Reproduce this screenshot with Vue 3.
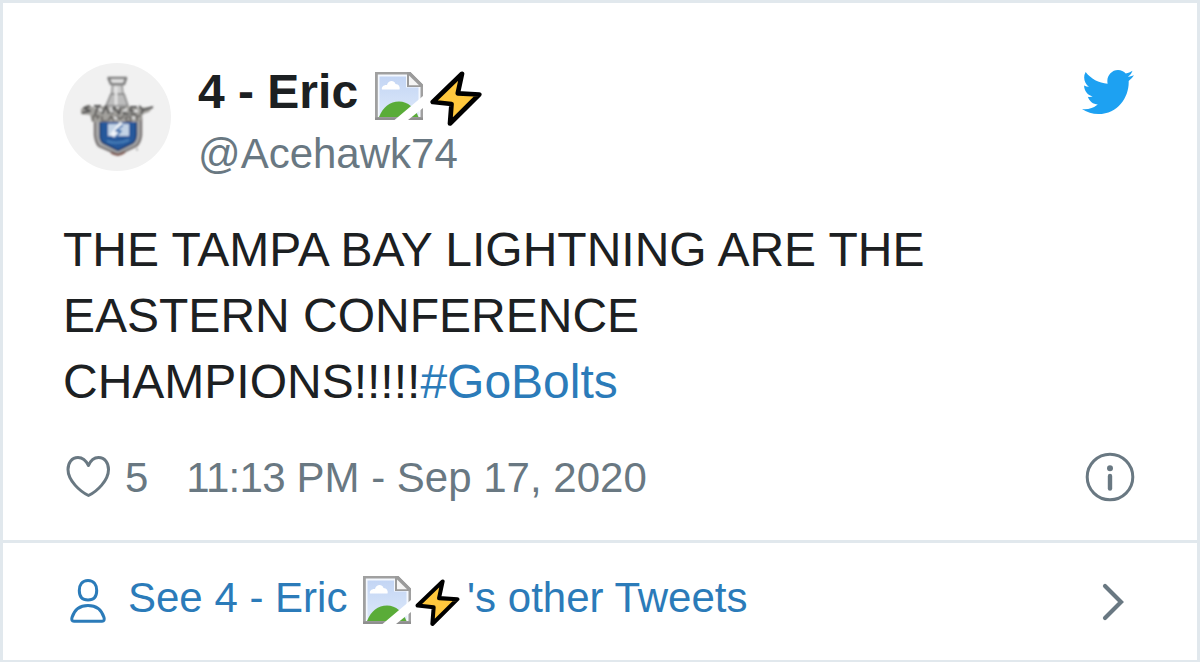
<script setup>
const author = '4 - Eric'
</script>

<template>
  <article class="card">
    <svg width="0" height="0" class="defs" aria-hidden="true">
      <defs>
        <linearGradient id="sky" x1="0" y1="0" x2="0" y2="1">
          <stop offset="0" stop-color="#c3d5f4" />
          <stop offset="1" stop-color="#dce8fa" />
        </linearGradient>
        <filter id="smooth" x="0" y="0" width="100%" height="100%"><feGaussianBlur stdDeviation="0.6" /></filter>
        <symbol id="missing" viewBox="0 0 48 48">
          <path d="M0 0H35L48 13V24L19.500 48H0Z" fill="#a0a0a0" />
          <g filter="url(#smooth)">
            <path d="M0 0H35L48 13V48H0Z" fill="#a0a0a0" />
            <path d="M2.800 2.500H32V15H45.500V45H2.800Z" fill="#f4f8fe" />
            <path d="M4.500 4.500H31V15.500H43.500V43.500H4.500Z" fill="url(#sky)" />
            <path d="M7 17.500C6 15 9 12.500 12 13C13 8.500 19 7.500 20.500 12C23.500 12 25.500 15 24.500 17.500Z" fill="#fff" />
            <path d="M4 45C8 35 15 29.500 24 29.500C33 29.500 40 36 43.500 45Z" fill="#5aac38" />
            <path d="M0 45.500H48V48H0Z" fill="#8f8f8f" />
            <path d="M32 0H35.500L48 12.500V15H32Z" fill="#9b9b9b" />
            <path d="M34 3.500L44 13.200H34Z" fill="#f5f5f5" />
          </g>
          <path d="M48 24V36L33 48H19.500Z" fill="#fff" />
        </symbol>
        <symbol id="bolt" viewBox="0 0 52 56">
          <path d="M32 2.800L2.800 31L21.500 33L20 52.500L49.200 23.500L27.800 22.300Z" fill="#ffc83d" stroke="#000" stroke-width="4.700" stroke-linejoin="round" />
        </symbol>
      </defs>
    </svg>

    <div class="tweet">
      <header class="header">
        <svg class="avatar" viewBox="0 0 108 108">
          <defs>
            <clipPath id="round"><circle cx="54" cy="54" r="54" /></clipPath>
            <filter id="soft" x="-10%" y="-10%" width="120%" height="120%"><feGaussianBlur stdDeviation="0.9" /></filter>
          </defs>
          <g clip-path="url(#round)">
            <rect width="108" height="108" fill="#f1f1f1" />
            <g filter="url(#soft)" stroke-linejoin="round">
              <path d="M45.500 15H63L61 21H48Z" fill="#e8e8e8" stroke="#7d7d7d" stroke-width="2.600" />
              <path d="M49.500 22H59L60 32H48.500Z" fill="#cfcfcf" stroke="#8b8b8b" stroke-width="1.500" />
              <path d="M48 31H61L65 43H43Z" fill="#bcbcbc" stroke="#808080" stroke-width="1.500" />
              <path d="M53 23V42" stroke="#e8e8e8" stroke-width="2.500" />
              <path d="M32 54H78V72Q77 80 73 83L55 91.500L36 83Q33 80 32 72Z" fill="#b0b0b0" stroke="#777272" stroke-width="2.400" />
              <path d="M37 58H73.500V72Q73 78 70 80L55 87.500L40 80Q37 78 37 72Z" fill="#28599b" stroke="#173765" stroke-width="1.500" />
              <path d="M45 61H66V73H45Z" fill="#c3d3e6" />
              <path d="M49 73L59 60" stroke="#f2f6fb" stroke-width="5" />
              <path d="M60 62L53 68H58L52 75" fill="none" stroke="#386fae" stroke-width="1.800" />
              <path d="M44 78Q54 82 66 77" fill="none" stroke="#477fb9" stroke-width="2" />
              <path d="M48 89.500Q55 94 62 89" fill="none" stroke="#7c5248" stroke-width="2" />
              <path d="M18 46L24 42L33 45L41 43L52 46L64 43L73 45L90 44L86 49L80 51L77 59H29L27 52L18 51Z" fill="#a3a19d" />
              <path d="M27 43L21 45L27 48L19 50M31 43H38M35 43L32 52M39 51L43 43L46 51M49 51L51 44L56 51L58 44M61 44V51H66M74 44H68L67 48H73M67 51H73M76 43L80 47L90 44M80 47L78 51" fill="none" stroke="#555" stroke-width="2" />
              <path d="M30 58V53H36L34 56M39 53V58H44M45 58L48 53L51 58M53 53L57 56L61 53M63 58V54H68V58H63M72 53H78M74 53V58" fill="none" stroke="#666360" stroke-width="1.700" />
              <path d="M36 46L39 48M47 46L50 49M60 48L64 46M71 48H75M51 55H54M69 55H72" stroke="#e6e6e6" stroke-width="2" />
              <path d="M73 86.500H75" stroke="#999" stroke-width="1.500" />
            </g>
          </g>
        </svg>
        <div class="identity">
          <div class="name">{{ author }} <svg class="missing"><use href="#missing" /></svg><svg class="bolt"><use href="#bolt" /></svg></div>
          <div class="handle">@Acehawk74</div>
        </div>
        <svg class="bird" viewBox="4 10 63.812 51.858" preserveAspectRatio="none">
          <path fill="#1da1f2" d="M67.812 16.141a26.246 26.246 0 0 1-7.519 2.06 13.134 13.134 0 0 0 5.756-7.244 26.127 26.127 0 0 1-8.313 3.176A13.075 13.075 0 0 0 48.182 10c-7.229 0-13.092 5.861-13.092 13.093 0 1.026.118 2.021.338 2.981-10.885-.548-20.528-5.757-26.987-13.679a13.048 13.048 0 0 0-1.771 6.581c0 4.542 2.312 8.551 5.824 10.898a13.048 13.048 0 0 1-5.93-1.638c-.002.055-.002.11-.002.162 0 6.345 4.513 11.638 10.504 12.84a13.177 13.177 0 0 1-3.449.457c-.846 0-1.667-.078-2.465-.231 1.667 5.2 6.499 8.986 12.23 9.09a26.276 26.276 0 0 1-16.26 5.606A26.21 26.21 0 0 1 4 55.976a37.036 37.036 0 0 0 20.067 5.882c24.083 0 37.251-19.949 37.251-37.249 0-.566-.014-1.134-.039-1.694a26.597 26.597 0 0 0 6.533-6.774z" />
        </svg>
      </header>

      <p class="message">THE TAMPA BAY LIGHTNING ARE THE<br />EASTERN CONFERENCE<br />CHAMPIONS!!!!!<a>#GoBolts</a></p>

      <div class="meta">
        <svg class="heart" viewBox="0 0 46 44">
          <path d="M23.500 10.500C20.500 4.500 16.500 2.500 13 2.500C6.500 2.500 3 8 3 14.500C3 25.500 15 36.500 23.500 40.500C32 36.500 43.500 25.500 43.500 14.500C43.500 8 40 2.500 33.500 2.500C30 2.500 26 4.500 23.500 10.500Z" />
        </svg>
        <span class="likes">5</span>
        <span class="date"><span class="time">11:13</span> PM - Sep 17, 2020</span>
        <svg class="info" viewBox="0 0 50 50">
          <circle cx="25" cy="25" r="22.800" fill="none" stroke="#697882" stroke-width="3" />
          <circle cx="25" cy="16.200" r="3" fill="#697882" />
          <path d="M25 24V36.500" stroke="#697882" stroke-width="4.400" stroke-linecap="round" />
        </svg>
      </div>
    </div>

    <footer class="footer">
      <svg class="person" viewBox="0 0 38 46">
        <path d="M19 2.500C13 2.500 10.300 7 10.300 12.500C10.300 18.500 12.500 22 19 22C25.500 22 27.700 18.500 27.700 12.500C27.700 7 25 2.500 19 2.500Z" />
        <path d="M5 43.200H33Q36 43 35 39.500C32.500 31.500 27 27.500 19 27.500C11 27.500 5.500 31.500 3 39.500Q2 43 5 43.200Z" />
      </svg>
      <span class="more">See {{ author }} <svg class="missing"><use href="#missing" /></svg><svg class="bolt"><use href="#bolt" /></svg>'s other Tweets</span>
      <svg class="chevron" viewBox="0 0 24 40"><path d="M4 4L20 20L4 36" /></svg>
    </footer>
  </article>
</template>

<style>
body {
  background: #fff;
}
</style>

<style scoped>
.card {
  box-sizing: border-box;
  width: 1200px;
  height: 662px;
  border: 3px solid #e1e8ed;
  border-bottom-width: 2px;
  background: #fff;
  font-family: "Liberation Sans", Arial, sans-serif;
  color: #1c2022;
  overflow: hidden;
}
.defs {
  position: absolute;
}
.tweet {
  box-sizing: border-box;
  height: 540px;
  padding: 60px 60px 0;
  border-bottom: 3px solid #e1e8ed;
}
.header {
  display: flex;
  align-items: flex-start;
  height: 108px;
}
.avatar {
  width: 108px;
  height: 108px;
  flex: none;
}
.identity {
  margin-left: 27px;
  flex: 1;
}
.name {
  height: 60px;
  line-height: 58px;
  font-size: 48px;
  font-weight: 700;
  white-space: nowrap;
}
.handle {
  line-height: 62px;
  font-size: 42px;
  color: #697882;
}
.missing {
  width: 48px;
  height: 48px;
}
.name .missing {
  margin-left: 4px;
  vertical-align: -12px;
}
.name .bolt {
  width: 52px;
  height: 56px;
  margin-left: 7px;
  vertical-align: -19px;
}
.bird {
  width: 52px;
  height: 44px;
  margin: 7px 3px 0 0;
}
.message {
  margin: 46px 0 0;
  font-size: 48px;
  line-height: 66px;
  white-space: nowrap;
}
.message a {
  color: #2b7bb9;
}
.meta {
  display: flex;
  align-items: center;
  height: 50px;
  margin-top: 37px;
  font-size: 42px;
  color: #697882;
}
.heart {
  width: 46px;
  height: 44px;
  margin: 0 0 1px 2px;
}
.heart path {
  fill: none;
  stroke: #697882;
  stroke-width: 3;
  stroke-linejoin: round;
}
.likes {
  margin-left: 14px;
  padding-top: 2px;
}
.date {
  margin-left: 38px;
  padding-top: 2px;
}
.time {
  letter-spacing: -0.7px;
}
.info {
  width: 50px;
  height: 50px;
  margin: 0 2px 0 auto;
}
.footer {
  display: flex;
  align-items: center;
  height: 117px;
  padding: 0 60px;
  font-size: 42px;
  color: #2b7bb9;
}
.person {
  width: 38px;
  height: 46px;
  margin: 0 0 1px 6px;
}
.person path {
  fill: none;
  stroke: #2b7bb9;
  stroke-width: 3;
  stroke-linejoin: round;
}
.more {
  margin-left: 21px;
  padding-bottom: 6px;
  line-height: 54px;
  white-space: nowrap;
}
.more .missing {
  margin-left: 4px;
  vertical-align: -12px;
}
.more .bolt {
  width: 45px;
  height: 48px;
  margin: 0 7px 0 4px;
  vertical-align: -15px;
}
.chevron {
  width: 24px;
  height: 40px;
  margin: 0 12px 0 auto;
}
.chevron path {
  fill: none;
  stroke: #697882;
  stroke-width: 4.2;
  stroke-linecap: round;
  stroke-linejoin: miter;
}
</style>
